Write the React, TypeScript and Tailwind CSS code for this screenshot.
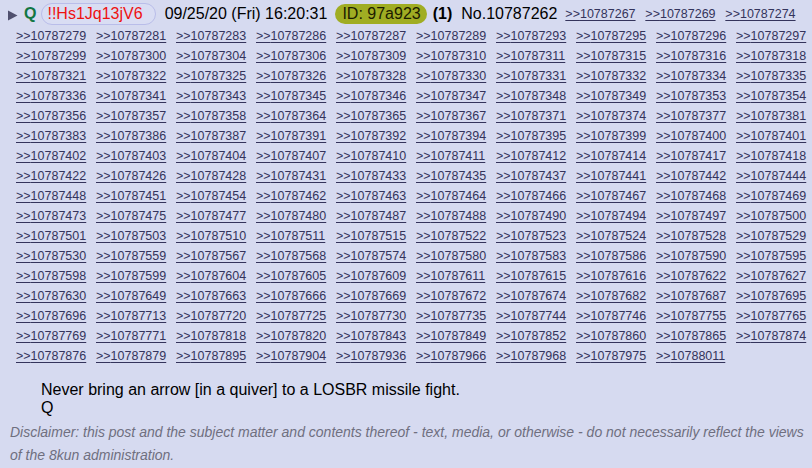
import React from "react";

const header = ["10787267", "10787269", "10787274"];
const tails = [
  "279 281 283 286 287 289 293 295 296 297",
  "299 300 304 306 309 310 311 315 316 318",
  "321 322 325 326 328 330 331 332 334 335",
  "336 341 343 345 346 347 348 349 353 354",
  "356 357 358 364 365 367 371 374 377 381",
  "383 386 387 391 392 394 395 399 400 401",
  "402 403 404 407 410 411 412 414 417 418",
  "422 426 428 431 433 435 437 441 442 444",
  "448 451 454 462 463 464 466 467 468 469",
  "473 475 477 480 487 488 490 494 497 500",
  "501 503 510 511 515 522 523 524 528 529",
  "530 559 567 568 574 580 583 586 590 595",
  "598 599 604 605 609 611 615 616 622 627",
  "630 649 663 666 669 672 674 682 687 695",
  "696 713 720 725 730 735 744 746 755 765",
  "769 771 818 820 843 849 852 860 865 874",
  "876 879 895 904 936 966 968 975",
];
const links: string[] = [
  ...header,
  ...tails.join(" ").split(" ").map((t) => "10787" + t),
  "10788011",
];

function Link({ n }: { n: string }) {
  return (
    <a
      href="#"
      className="text-[12.5px] leading-[20px] text-[#34345c] underline decoration-[#34345c] underline-offset-[2px] w-[70px] whitespace-nowrap"
    >
      &gt;&gt;{n}
    </a>
  );
}

export default function App() {
  return (
    <div
      className="w-[812px] h-[468px] bg-[#d6daf0] text-black overflow-hidden"
      style={{ fontFamily: '"Liberation Sans", Arial, sans-serif' }}
    >
      <div className="flex flex-wrap items-center gap-x-[10px] pl-[16px] pt-[2px]">
        <div className="flex items-center h-[24px] -ml-[8px] mr-[-2px] text-[16px] whitespace-nowrap">
          <svg width="10" height="11" viewBox="0 0 10 11" className="mr-[6px] mt-[3px]">
            <polygon points="0,0.5 9.5,5.5 0,10.5" fill="#50506e" />
          </svg>
          <span className="font-bold text-[#117743]">Q</span>
          <span className="ml-[5px] h-[22px] flex items-center rounded-full border border-[#b9bde9] bg-[#d9ddf3] pl-[5px] pr-[12px] text-[#ee1111]">
            !!Hs1Jq13jV6
          </span>
          <span className="ml-[9px]">09/25/20 (Fri) 16:20:31</span>
          <span className="ml-[8px] h-[20px] flex items-center rounded-full bg-[#a0ad23] pl-[7px] pr-[6px] text-[#1c1c00]">
            ID: 97a923
          </span>
          <span className="ml-[6px] font-bold">(1)</span>
          <span className="ml-[9px]">No.10787262</span>
        </div>
        {links.map((n) => (
          <Link key={n} n={n} />
        ))}
      </div>
      <div className="pl-[41px] pt-[15px] text-[16px] leading-[18px]">
        <p>Never bring an arrow [in a quiver] to a LOSBR missile fight.</p>
        <p>Q</p>
      </div>
      <div className="pl-[10px] pt-[4px] pr-[6px] text-[14px] leading-[23px] italic text-[#6f6f7f]">
        Disclaimer: this post and the subject matter and contents thereof - text, media, or otherwise - do not necessarily reflect the views of the 8kun administration.
      </div>
    </div>
  );
}
